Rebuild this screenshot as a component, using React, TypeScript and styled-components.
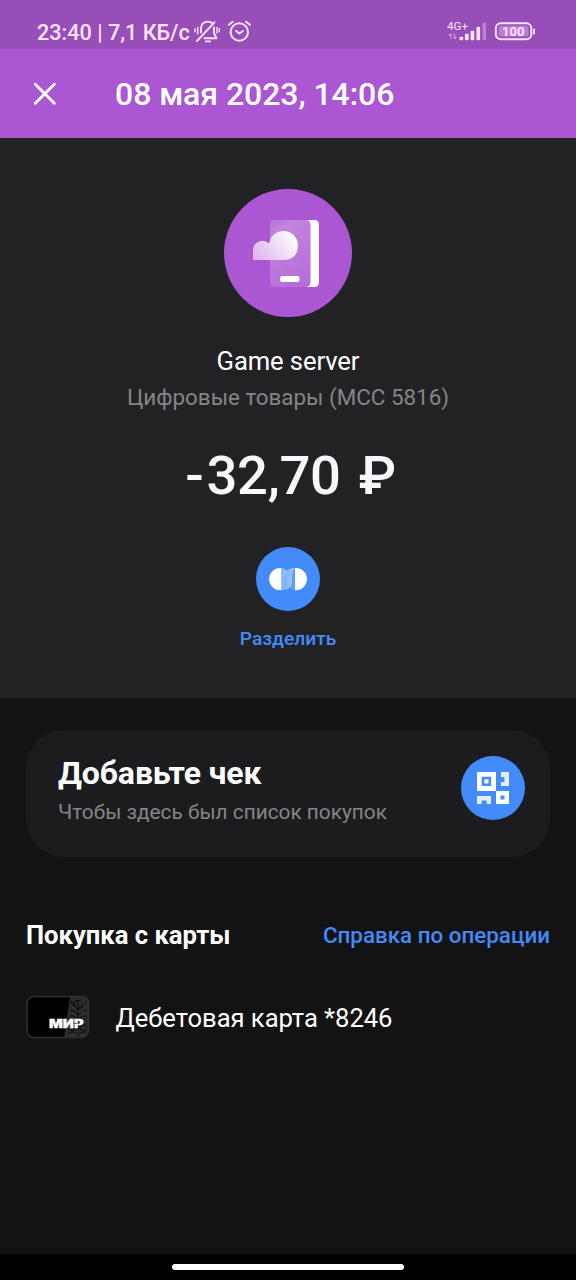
import React from "react";
import styled, { createGlobalStyle } from "styled-components";

const Global = createGlobalStyle`
  * { box-sizing: border-box; }
  body { margin: 0; background: #131313; font-family: Roboto, "Noto Sans", sans-serif; }
`;

const Screen = styled.main`
  width: 576px;
  height: 1280px;
  display: flex;
  flex-direction: column;
  background: #131313;
  overflow: hidden;
`;

const StatusBar = styled.div`
  height: 49px;
  flex: none;
  display: flex;
  align-items: flex-start;
  padding: 18px 40px 0 37px;
  background: #984eb8;
  color: #fbe4ff;
`;

const StatusIcons = styled.div<{ $push?: boolean }>`
  display: flex;
  gap: 5px;
  margin-left: ${(p) => (p.$push ? "auto" : "3px")};
`;

const Header = styled.header`
  height: 89px;
  flex: none;
  display: flex;
  align-items: center;
  padding: 0 33px;
  gap: 58px;
  background: #ab57d3;
`;

const IconButton = styled.button`
  display: flex;
  padding: 0;
  border: 0;
  background: none;
`;

interface TextProps {
  $size: number;
  $line: number;
  $weight?: number;
  $color?: string;
  $track?: number;
}

const Text = styled.div<TextProps>`
  margin: 0;
  font-size: ${(p) => p.$size}px;
  line-height: ${(p) => p.$line}px;
  font-weight: ${(p) => p.$weight ?? 400};
  color: ${(p) => p.$color ?? "#fff"};
  letter-spacing: ${(p) => p.$track ?? 0}px;
  white-space: nowrap;
`;

const Summary = styled.section`
  height: 560px;
  flex: none;
  display: flex;
  flex-direction: column;
  align-items: center;
  padding-top: 51px;
  background: #222224;
`;

const Round = styled.div<{ $size: number; $color: string }>`
  width: ${(p) => p.$size}px;
  height: ${(p) => p.$size}px;
  flex: none;
  border-radius: 50%;
  background: ${(p) => p.$color};
  svg { display: block; }
`;

const Merchant = styled.div`
  display: flex;
  flex-direction: column;
  align-items: center;
  gap: 6px;
  margin-top: 28px;
`;

const Amount = styled(Text)`
  display: flex;
  gap: 3px;
  margin: 33px 0 39px;
  padding-left: 5px;
`;

const Currency = styled.span`
  margin-left: 15px;
`;

const SplitAction = styled.div`
  display: flex;
  flex-direction: column;
  align-items: center;
  gap: 16px;
`;

const ReceiptCard = styled.section`
  height: 127px;
  flex: none;
  display: flex;
  justify-content: space-between;
  margin: 32px 26px 0;
  padding: 25px 25px 0 32px;
  border-radius: 38px;
  background: #1c1c1e;
`;

const ReceiptText = styled.div`
  display: flex;
  flex-direction: column;
  gap: 7px;
`;

const ReceiptAction = styled.div`
  padding-top: 1px;
`;

const PurchaseHead = styled.div`
  display: flex;
  align-items: center;
  justify-content: space-between;
  margin: 62px 26px 0;
  height: 32px;
`;

const CardRow = styled.div`
  display: flex;
  align-items: flex-start;
  gap: 25.5px;
  margin: 44px 26px 0;
  height: 44px;
`;

const CardName = styled.div`
  padding-top: 7px;
`;

const NavBar = styled.div`
  height: 26px;
  flex: none;
  display: flex;
  justify-content: center;
  align-items: center;
  margin-top: auto;
  background: #000;
`;

const HomeIndicator = styled.div`
  width: 232px;
  height: 6px;
  border-radius: 3px;
  background: #fff;
`;

const MutedBellIcon = () => (
  <svg width="28" height="26" viewBox="0 0 28 26" fill="none" stroke="currentColor" strokeWidth="1.9" strokeLinecap="round">
    <path d="M8 14.500V10.500C8 6.200 11 3.600 14.800 3.600c2 0 3.700.7 4.900 2M21 9.500V15l2.500 5.200H11.500" strokeLinejoin="round" />
    <path d="M4 23 21.500 4.300" />
    <path d="M12.800 23.400h4.200" />
    <path d="M4.800 9.500v6.500M2 10.700v3M24 9.500v5.500M26.300 10.700v3" strokeWidth="1.400" />
  </svg>
);

const AlarmIcon = () => (
  <svg width="26" height="26" viewBox="0 0 26 26" fill="none" stroke="currentColor" strokeWidth="2" strokeLinecap="round" strokeLinejoin="round">
    <circle cx="13.300" cy="14" r="8.700" />
    <path d="m10.200 13 3.100 2.500 3.700-2.500M2.900 6.800 6.700 3.800M23.800 6.800 20 3.800" />
  </svg>
);

const SignalIcon = () => (
  <svg width="42" height="26" viewBox="0 0 42 26" fill="currentColor">
    <text x="0" y="11.800" fontSize="11" textLength="21" lengthAdjust="spacingAndGlyphs">4G+</text>
    <path d="M4 15.500v5.500M2 17.500 4 15.500M7.500 15.500v5.500M9.300 19 7.500 21" stroke="currentColor" strokeWidth="1.200" opacity=".5" />
    <rect x="12.500" y="18.700" width="3.600" height="3.600" rx="1" />
    <rect x="18" y="15.700" width="3.600" height="6.600" rx="1" />
    <rect x="23.600" y="12.700" width="3.600" height="9.600" rx="1" />
    <rect x="29.500" y="8.700" width="3.600" height="13.600" rx="1" />
    <rect x="35.500" y="4.700" width="3.600" height="17.600" rx="1" opacity=".35" />
  </svg>
);

const BatteryIcon = () => (
  <svg width="42" height="26" viewBox="0 0 42 26">
    <rect x="1.800" y="5.200" width="35.500" height="16" rx="5" fill="none" stroke="currentColor" strokeWidth="1.900" />
    <rect x="4.500" y="7.800" width="30" height="10.800" rx="2.500" fill="#bd7bd6" />
    <path d="M40 11.500v4" stroke="currentColor" strokeWidth="2" strokeLinecap="round" />
    <text x="8" y="18.200" fontSize="13" fontWeight="700" fill="currentColor" textLength="22.500" lengthAdjust="spacingAndGlyphs">100</text>
  </svg>
);

const CloseIcon = () => (
  <svg width="24" height="24" viewBox="0 0 24 24" fill="none" stroke="#fff" strokeWidth="2.900" strokeLinecap="round">
    <path d="m2.300 2.300 19 19M21.300 2.300l-19 19" />
  </svg>
);

const DigitalGoodsIcon = () => (
  <svg width="128" height="128" viewBox="0 0 128 128">
    <defs>
      <linearGradient id="phone" x1="46" y1="34" x2="84" y2="96" gradientUnits="userSpaceOnUse">
        <stop stopColor="#fff" stopOpacity=".18" />
        <stop offset=".15" stopColor="#fff" stopOpacity=".27" />
        <stop offset="1" stopColor="#fff" stopOpacity=".12" />
      </linearGradient>
      <linearGradient id="cloud" x1="70" y1="44" x2="33" y2="73" gradientUnits="userSpaceOnUse">
        <stop stopColor="#fff" />
        <stop offset="1" stopColor="#dcb3ed" />
      </linearGradient>
    </defs>
    <path d="M82 31h8c3.500 0 5 2 5 5v57c0 3-1.500 5-5 5h-9c3.500 0 5.500-2 5.500-5V36c0-3-1.500-5-4.500-5Z" fill="#fff" />
    <path d="M50 31h31c3.500 0 5.500 2 5.500 5v57c0 3-2 5-5.500 5H50c-3 0-4-2-4-5V36c0-3 1-5 4-5Z" fill="url(#phone)" />
    <rect x="56" y="87" width="19.500" height="6" rx="2.500" fill="#fff" />
    <path d="M29 71V62a9.500 9.500 0 0 1 16.200-7.400A14.400 14.400 0 0 1 73.900 56.500c0 9-5 14.500-14.400 14.500Z" fill="url(#cloud)" />
  </svg>
);

const SplitIcon = () => (
  <svg width="64" height="64" viewBox="0 0 64 64">
    <defs>
      <linearGradient id="link" x1="28" y1="0" x2="39" y2="0" gradientUnits="userSpaceOnUse">
        <stop stopColor="#fff" stopOpacity=".3" />
        <stop offset="1" stopColor="#fff" stopOpacity=".55" />
      </linearGradient>
    </defs>
    <path d="M24.300 20.900h.8v22.400h-.8a11.200 11.200 0 0 1 0-22.400ZM39 20.900h.8a11.200 11.200 0 0 1 0 22.400H39Z" fill="#fff" />
    <path d="M25 21c4 .6 6 2 6 4-1.700 1.500-2.500 3-2.500 6v4c0 4-1 7-3.500 8.300Z" fill="#fff" opacity=".38" />
    <path d="M39 21C32 21 28.500 24.500 28.500 30v4c0 5-1 8-3.500 9.300 7.500 0 11-3.500 11-9.300v-4c0-4 .8-7 3-9Z" fill="url(#link)" />
    <path d="M36 34v-4c0-4 1-7 3-9v22.300c-2.500 0-4.500-1.800-5.500-3.800 1.700-1.500 2.500-3 2.500-5.500Z" fill="#fff" opacity=".14" />
  </svg>
);

const QrIcon = () => (
  <svg width="64" height="64" viewBox="0 0 64 64" fillRule="evenodd">
    <path d="M16 16h19v19H16Zm4.700 4.700v9.300h9.300v-9.300Z" fill="#fff" />
    <path d="M23.300 23.300h4.200v4.200h-4.200Z" fill="#fff" />
    <path d="M35 35h13v13H35Zm4.500 4.500v4h4v-4Z" fill="#fff" />
    <path d="M40 16h8v14h-8v-4h3.500v-5H40ZM16 40h14v8h-4.300v-3.500h-5V48H16Z" fill="#e4edff" />
  </svg>
);

const MirCard = () => (
  <svg width="64" height="44" viewBox="0 0 64 44">
    <defs>
      <clipPath id="card"><rect x="1" y="1.500" width="61.500" height="41" rx="7" /></clipPath>
    </defs>
    <rect x="1" y="1.500" width="61.500" height="41" rx="7" fill="#000" />
    <g clipPath="url(#card)">
      <path d="M44 1h20v42H38Z" fill="#2a2a2c" />
      <g fill="none" stroke="#090909" strokeWidth="1">
        <circle cx="52" cy="9" r="4" />
        <path d="M45 6c2 4 3 7 7 9 4-2 6-5 8-9M44 15c3 0 5 2 8 6 3-4 5-6 9-6M52 5v36M43 22c4-3 6 0 9 3 3-3 5-6 9-3M42 32c3-4 7-2 7 1s-5 4-7 1M61 32c-3-4-7-2-7 1s5 4 7 1M42 40c4-5 7-3 10 1 3-4 6-6 9-1" />
      </g>
      <g fill="none" stroke="#525254" strokeWidth=".7" strokeDasharray="1.500 2">
        <path d="M49 5c4-3 8 1 6 5s-8 3-8 0M46 12c5 1 5 6 11 5M58 7v13M46 18c4 3 8 4 12 1M43 36c3 5 8 4 9 0 1 5 6 5 9 1M40 40h20" />
      </g>
    </g>
    <rect x="1" y="1.500" width="61.500" height="41" rx="7" fill="none" stroke="#303032" strokeWidth="1.600" />
    <text x="23" y="33.300" fontFamily="Inter" fontSize="11.500" fontWeight="900" fill="#fff" stroke="#fff" strokeWidth=".3" textLength="34.500" lengthAdjust="spacingAndGlyphs">МИР</text>
    <path d="M47 28.300h7" stroke="#1c1c1e" strokeWidth=".7" />
  </svg>
);

export default function App() {
  return (
    <Screen>
      <Global />
      <StatusBar>
        <Text $size={21.6} $line={29} $weight={500} $track={0} $color="#fbe4ff">23:40 | 7,1 КБ/с</Text>
        <StatusIcons><MutedBellIcon /><AlarmIcon /></StatusIcons>
        <StatusIcons $push><SignalIcon /><BatteryIcon /></StatusIcons>
      </StatusBar>
      <Header>
        <IconButton aria-label="Закрыть"><CloseIcon /></IconButton>
        <Text as="h1" $size={32} $line={40} $weight={500} $track={-0.06}>08 мая 2023, 14:06</Text>
      </Header>
      <Summary>
        <Round $size={128} $color="#ab57d3"><DigitalGoodsIcon /></Round>
        <Merchant>
          <Text $size={25.6} $line={32} $track={-0.1}>Game server</Text>
          <Text $size={22.4} $line={28} $color="#858587">Цифровые товары (MCC 5816)</Text>
        </Merchant>
        <Amount $size={54.4} $line={64} $weight={500} $track={-0.3} $color="#f7f8fc">
          <span>-</span>
          <span>32,70</span>
          <Currency>₽</Currency>
        </Amount>
        <SplitAction>
          <Round $size={64} $color="#428bf9"><SplitIcon /></Round>
          <Text $size={19.2} $line={24} $weight={500} $color="#428bf9">Разделить</Text>
        </SplitAction>
      </Summary>
      <ReceiptCard>
        <ReceiptText>
          <Text $size={32} $line={36} $weight={700} $track={-0.1}>Добавьте чек</Text>
          <Text $size={20.8} $line={28} $color="#858587">Чтобы здесь был список покупок</Text>
        </ReceiptText>
        <ReceiptAction>
          <Round $size={64} $color="#428bf9"><QrIcon /></Round>
        </ReceiptAction>
      </ReceiptCard>
      <PurchaseHead>
        <Text $size={25.6} $line={32} $weight={700}>Покупка с карты</Text>
        <Text $size={22.4} $line={32} $weight={500} $color="#428bf9">Справка по операции</Text>
      </PurchaseHead>
      <CardRow>
        <MirCard />
        <CardName><Text $size={25.6} $line={32} $track={-0.04}>Дебетовая карта *8246</Text></CardName>
      </CardRow>
      <NavBar><HomeIndicator /></NavBar>
    </Screen>
  );
}
